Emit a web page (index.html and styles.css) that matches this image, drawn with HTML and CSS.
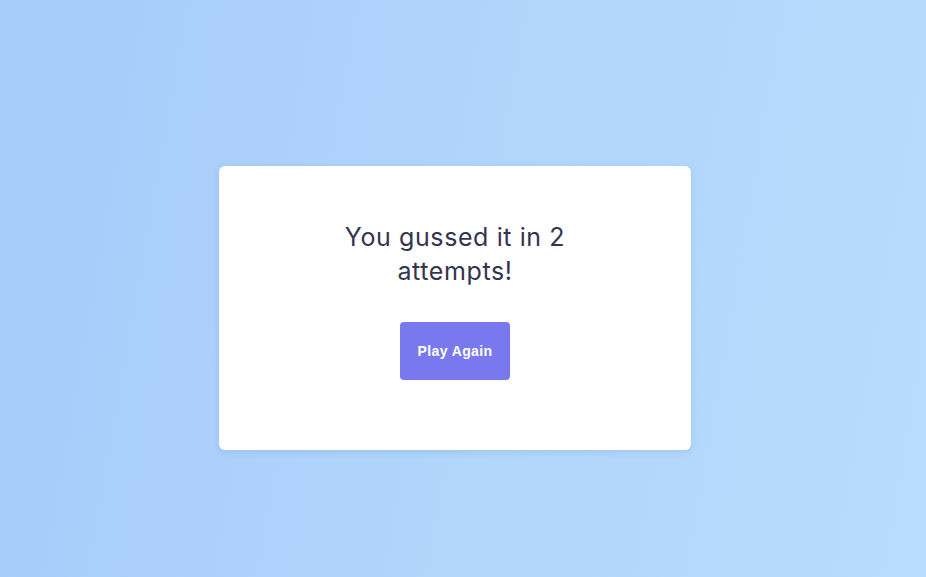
FILE: index.html
```html
<!DOCTYPE html>
<html lang="en">
<head>
<meta charset="utf-8">
<title>Guess</title>
<link rel="stylesheet" href="styles.css">
</head>
<body>
<main class="page">
  <section class="card">
    <h1 class="message">You gussed it in 2 attempts!</h1>
    <button class="btn">Play Again</button>
  </section>
</main>
</body>
</html>
```

FILE: styles.css
```css
* { box-sizing: border-box; }
html, body { margin: 0; height: 100%; }
body {
  background: linear-gradient(100deg, #a7cbfa 0%, #b1d5fb 55%, #b8dcfb 100%);
  font-family: "Inter", "DejaVu Sans", sans-serif;
}
.page {
  padding: 166px 0 0 219px;
}
.card {
  width: 472px;
  height: 284px;
  background: #fff;
  border-radius: 6px;
  box-shadow: 0 2px 6px rgba(80, 120, 180, 0.18);
  padding: 54px 0 0;
  display: flex;
  flex-direction: column;
  align-items: center;
}
.message {
  margin: 0;
  width: 270px;
  text-align: center;
  font-size: 25px;
  line-height: 34px;
  font-weight: 400;
  color: #34344f;
  letter-spacing: 0.6px;
}
.btn {
  margin-top: 34px;
  width: 110px;
  height: 58px;
  padding-top: 1px;
  border: none;
  border-radius: 4px;
  background: #7a78ef;
  color: #fff;
  font-family: "Liberation Sans", Arial, sans-serif;
  font-weight: 700;
  font-size: 14px;
  letter-spacing: 0.4px;
}
```
